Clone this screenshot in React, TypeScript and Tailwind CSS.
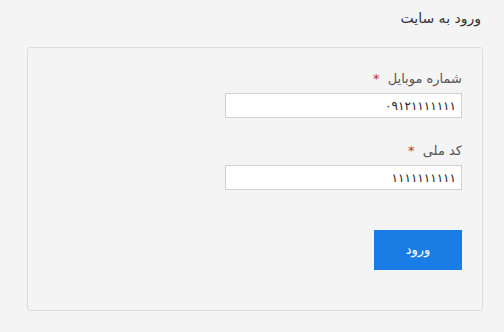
export default function App() {
  return (
    <div
      dir="rtl"
      className="h-[332px] w-[504px] bg-[#f4f4f4] text-[#333]"
      style={{ fontFamily: '"DejaVu Sans", "Noto Sans", sans-serif' }}
    >
      <div className="pr-[23px] pt-[8px] text-[14px] leading-[20px] text-[#333]">ورود به سایت</div>
      <div className="ml-[27px] mr-[21px] mt-[19px] h-[264px] rounded-[3px] border border-[#dcdcdc] bg-[#f4f4f4] pr-[20px] pt-[21px]">
        <div className="flex flex-col items-start">
          <label className="mb-[4px] text-[13px] leading-[20px] text-[#555]">
            شماره موبایل <span className="mr-[4px] text-[#c9302c]">*</span>
          </label>
          <input
            readOnly
            value="۰۹۱۲۱۱۱۱۱۱۱"
            className="h-[25px] w-[237px] border border-[#cfcfcf] bg-white px-[5px] text-[12px] tracking-[-1.5px] text-[#222] outline-none"
          />
          <label className="mb-[4px] mt-[23px] text-[13px] leading-[20px] text-[#555]">
            کد ملی <span className="mr-[4px] text-[#c9302c]">*</span>
          </label>
          <input
            readOnly
            value="۱۱۱۱۱۱۱۱۱۱"
            className="h-[25px] w-[237px] border border-[#cfcfcf] bg-white px-[5px] text-[12px] tracking-[-2px] text-[#222] outline-none"
          />
          <button className="mt-[40px] h-[40px] w-[88px] bg-[#1a7de6] text-[13px] text-white">ورود</button>
        </div>
      </div>
    </div>
  );
}
